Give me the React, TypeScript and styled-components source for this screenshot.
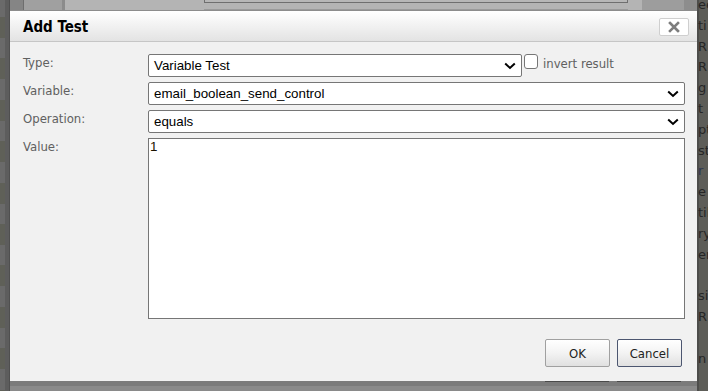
import React from "react";
import styled, { createGlobalStyle } from "styled-components";

const Global = createGlobalStyle`
  html, body { margin: 0; padding: 0; background: #8a8a8a; overflow: hidden; }
  #root { width: 708px; height: 391px; }
`;

const UI = `"DejaVu Sans Condensed", "DejaVu Sans", sans-serif`;
const FIELD = `"Liberation Sans", Arial, sans-serif`;

const Screen = styled.div`
  width: 708px;
  height: 391px;
  display: flex;
  overflow: hidden;
`;

const LeftCol = styled.div`
  width: 10px;
  flex: none;
  display: flex;
`;

const LeftStripes = styled.div`
  width: 5px;
  background: repeating-linear-gradient(
    180deg,
    #6a6a6a 0px,
    #6a6a6a 17px,
    #5f6058 17px,
    #5f6058 38px,
    #6a6a6a 38px,
    #6a6a6a 41.4px
  );
`;

const LeftEdge = styled.div`
  width: 5px;
  background: linear-gradient(90deg, #5d5d5d 0, #5d5d5d 4px, #4f4f4f 4px);
`;

const Center = styled.div`
  width: 687px;
  flex: none;
  display: flex;
  flex-direction: column;
`;

const TopStrip = styled.div`
  height: 10px;
  display: flex;
  flex: none;
`;

const Seg = styled.div<{ $w: number; $bg: string }>`
  width: ${(p) => p.$w}px;
  flex: none;
  background: ${(p) => p.$bg};
`;

const SegLine = styled.div<{ $bg: string }>`
  width: 1px;
  flex: none;
  background: ${(p) => p.$bg};
`;

const BgBox = styled.div`
  width: 424px;
  flex: none;
  height: 3px;
  background: #b7b7b7;
  border: 1px solid #6f6f6f;
  border-top: none;
  box-sizing: border-box;
`;

const BgBoxWrap = styled.div`
  width: 424px;
  flex: none;
  background: #b4b4b4;
  border-bottom: 1px solid #9a9a9a;
  box-sizing: border-box;
`;

const Dialog = styled.div`
  height: 371px;
  flex: none;
  display: flex;
  flex-direction: column;
  background: #f1f1f1;
  border-top: 1px solid #8c8c8c;
  box-sizing: border-box;
`;

const TitleBar = styled.div`
  height: 31px;
  flex: none;
  box-sizing: border-box;
  display: flex;
  align-items: center;
  justify-content: space-between;
  padding: 0 8px 0 13px;
  background: linear-gradient(180deg, #ffffff 0%, #f4f4f4 40%, #e3e3e3 100%);
  border-bottom: 1px solid #c6c6c6;
`;

const Title = styled.div`
  font-family: ${UI};
  font-stretch: semi-condensed;
  font-weight: bold;
  font-size: 15px;
  line-height: 29px;
  padding-top: 2px;
  color: #000;
`;

const CloseButton = styled.button`
  width: 30px;
  height: 18px;
  margin-top: 1px;
  padding: 0;
  display: flex;
  align-items: center;
  justify-content: center;
  background: #fff;
  border: 1px solid #cfcfcf;
  border-radius: 2px;
  box-sizing: border-box;
`;

const Body = styled.div`
  flex: 1;
  display: flex;
  flex-direction: column;
  padding: 12px 12px 14px 13px;
`;

const Form = styled.div`
  display: grid;
  grid-template-columns: 125px 537px;
  row-gap: 5px;
`;

const Label = styled.div`
  font-family: ${UI};
  font-stretch: semi-condensed;
  font-size: 13px;
  line-height: 15px;
  color: #606060;
  padding-top: 1px;
`;

const FieldRow = styled.div`
  display: flex;
  align-items: flex-start;
`;

const Select = styled.div<{ $w?: number }>`
  width: ${(p) => (p.$w ? `${p.$w}px` : "100%")};
  height: 23px;
  box-sizing: border-box;
  display: flex;
  align-items: center;
  justify-content: space-between;
  padding: 0 5px 0 5px;
  background: #fff;
  border: 1px solid #767676;
  border-radius: 2px;
  font-family: ${FIELD};
  font-size: 13.33px;
  color: #000;
`;

const Check = styled.div`
  width: 14px;
  height: 15px;
  margin-left: 2px;
  box-sizing: border-box;
  border: 1px solid #767676;
  border-radius: 3px;
  background: #fff;
`;

const CheckLabel = styled.span`
  margin-left: 5px;
  font-family: ${UI};
  font-stretch: semi-condensed;
  font-size: 13px;
  line-height: 15px;
  padding-top: 2px;
  color: #606060;
`;

const TextArea = styled.div`
  height: 181px;
  box-sizing: border-box;
  padding: 0 1px;
  background: #fff;
  border: 1px solid #767676;
  font-family: ${FIELD};
  font-size: 13.33px;
  line-height: 16px;
  color: #1a1200;
`;

const Footer = styled.div`
  margin-top: 20px;
  display: flex;
  justify-content: flex-end;
  gap: 7px;
  padding-right: 3px;
`;

const Button = styled.button<{ $focus?: boolean }>`
  width: 65px;
  height: 28px;
  box-sizing: border-box;
  padding: 0;
  border: 1px solid ${(p) => (p.$focus ? "#4c5670" : "#a0a0a0")};
  border-radius: 2px;
  background: linear-gradient(180deg, #ffffff 0%, #f3f3f3 50%, #e0e0e0 100%);
  font-family: ${UI};
  font-stretch: semi-condensed;
  font-size: 13px;
  color: #222;
`;

const BottomStrip = styled.div`
  height: 10px;
  flex: none;
  display: flex;
  flex-direction: column;
`;

const BottomTop = styled.div`
  height: 5px;
  background: #7b7b7b;
  display: flex;
  justify-content: flex-end;
  gap: 8px;
  padding-right: 16px;
`;

const Shadow = styled.div`
  width: 64px;
  height: 1px;
  background: #4a4a4a;
`;

const BottomLow = styled.div`
  height: 5px;
  background: #8a8a8a;
`;

const RightCol = styled.div`
  width: 11px;
  flex: none;
  overflow: hidden;
  background: linear-gradient(90deg, #4d4d4b 0, #4d4d4b 2px, #5d5d58 2px);
`;

const RightText = styled.div`
  margin-top: -5px;
  font-family: "DejaVu Sans", sans-serif;
  font-size: 13px;
  line-height: 20.8px;
  white-space: nowrap;
  color: #262626;
`;

const RLine = styled.div<{ $link?: boolean }>`
  height: 20.8px;
  padding-left: 1px;
  color: ${(p) => (p.$link ? "#2c3650" : "#262626")};
`;

const Chevron = () => (
  <svg width="12" height="8" viewBox="0 0 12 8">
    <path d="M1.2 1.5 L6 6 L10.8 1.5" fill="none" stroke="#000" strokeWidth="2" />
  </svg>
);

const CloseIcon = () => (
  <svg width="12" height="12" viewBox="0 0 12 12">
    <path d="M2 2 L10 10 M10 2 L2 10" stroke="#7d7d7d" strokeWidth="2.6" strokeLinecap="square" />
  </svg>
);

const rightLines: { t: string; link?: boolean }[] = [
  { t: "ee" },
  { t: "ti" },
  { t: "R" },
  { t: " R" },
  { t: "g" },
  { t: "t" },
  { t: "pt" },
  { t: "st" },
  { t: "r R", link: true },
  { t: "e" },
  { t: "til" },
  { t: "ry" },
  { t: "er" },
  { t: "" },
  { t: "si" },
  { t: "R" },
  { t: "" },
  { t: "n" },
  { t: "" },
];

export default function App() {
  return (
    <>
      <Global />
      <Screen>
        <LeftCol>
          <LeftStripes />
          <LeftEdge />
        </LeftCol>
        <Center>
          <TopStrip>
            <Seg $w={13} $bg="#858585" />
            <SegLine $bg="#6e6e6e" />
            <Seg $w={38} $bg="#a0a0a0" />
            <Seg $w={3} $bg="#8c8c8c" />
            <Seg $w={139} $bg="#b4b4b4" />
            <BgBoxWrap>
              <BgBox />
            </BgBoxWrap>
            <Seg $w={14} $bg="#b4b4b4" />
            <Seg $w={42} $bg="#9d9d9d" />
            <Seg $w={14} $bg="#8d8d8d" />
          </TopStrip>
          <Dialog>
            <TitleBar>
              <Title>Add Test</Title>
              <CloseButton aria-label="close">
                <CloseIcon />
              </CloseButton>
            </TitleBar>
            <Body>
              <Form>
                <Label>Type:</Label>
                <FieldRow>
                  <Select $w={374}>
                    <span>Variable Test</span>
                    <Chevron />
                  </Select>
                  <Check />
                  <CheckLabel>invert result</CheckLabel>
                </FieldRow>
                <Label>Variable:</Label>
                <Select>
                  <span>email_boolean_send_control</span>
                  <Chevron />
                </Select>
                <Label>Operation:</Label>
                <Select>
                  <span>equals</span>
                  <Chevron />
                </Select>
                <Label>Value:</Label>
                <TextArea>1</TextArea>
              </Form>
              <Footer>
                <Button>OK</Button>
                <Button $focus>Cancel</Button>
              </Footer>
            </Body>
          </Dialog>
          <BottomStrip>
            <BottomTop>
              <Shadow />
              <Shadow />
            </BottomTop>
            <BottomLow />
          </BottomStrip>
        </Center>
        <RightCol>
          <RightText>
            {rightLines.map((l, i) => (
              <RLine key={i} $link={l.link}>
                {l.t}
              </RLine>
            ))}
          </RightText>
        </RightCol>
      </Screen>
    </>
  );
}
